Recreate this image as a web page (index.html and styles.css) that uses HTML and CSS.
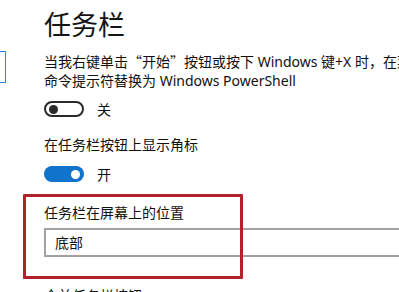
FILE: index.html
```html
<!DOCTYPE html>
<html lang="zh-CN">
<head>
<meta charset="utf-8">
<title>任务栏</title>
<link rel="stylesheet" href="styles.css">
</head>
<body>
<div class="page">
  <div class="side"><div class="side-box"></div></div>
  <div class="main">
    <h1 class="title">任务栏</h1>
    <p class="desc">当我右键单击<span class="q">“</span>开始<span class="q">”</span>按钮或按下 Windows 键+X 时，在菜单中将命令提示符<br>命令提示符替换为 Windows PowerShell</p>
    <div class="toggle-row">
      <span class="toggle off"><span class="knob"></span></span>
      <span class="state">关</span>
    </div>
    <p class="label label-badge">在任务栏按钮上显示角标</p>
    <div class="toggle-row row-on">
      <span class="toggle on"><span class="knob"></span></span>
      <span class="state">开</span>
    </div>
    <p class="label label-pos">任务栏在屏幕上的位置</p>
    <div class="select">底部</div>
    <p class="label label-merge">合并任务栏按钮</p>
  </div>
  <div class="highlight"></div>
</div>
</body>
</html>
```
FILE: styles.css
```css
html, body {
  margin: 0;
  padding: 0;
  background: #ffffff;
}
body {
  font-family: "Noto Sans", "Noto Sans CJK SC", sans-serif;
  font-size: 14px;
  color: #111;
  overflow: hidden;
}
.page {
  position: relative;
  display: flex;
  width: 399px;
  height: 292px;
  overflow: hidden;
}
.side {
  width: 6px;
  flex: none;
  overflow: hidden;
}
.side-box {
  margin-top: 51px;
  margin-left: -24px;
  width: 28px;
  height: 30px;
  border: 1.5px solid #3a86c8;
}
.main {
  flex: 1;
  min-width: 0;
  padding-left: 38px;
  white-space: nowrap;
}
.title {
  margin: 6px 0 0;
  font-size: 27px;
  line-height: 36px;
  font-weight: 400;
  color: #151515;
  font-family: "Noto Sans CJK SC", sans-serif;
}
.desc {
  margin: 10px 0 0;
  line-height: 19px;
  color: #111;
}
.q {
  font-family: "Noto Sans CJK SC", sans-serif;
}
.toggle-row {
  display: flex;
  align-items: center;
  gap: 13px;
  height: 16px;
  margin-top: 11px;
}
.row-on {
  margin-top: 12px;
}
.toggle {
  box-sizing: border-box;
  width: 40px;
  height: 16px;
  border-radius: 8px;
  display: flex;
  align-items: center;
}
.toggle.off {
  border: 2px solid #2a2a2a;
  padding-left: 3px;
}
.toggle.off .knob {
  width: 9px;
  height: 9px;
  border-radius: 50%;
  background: #2a2a2a;
}
.toggle.on {
  background: #1173cc;
  justify-content: flex-end;
  padding-right: 4px;
}
.toggle.on .knob {
  width: 9px;
  height: 9px;
  border-radius: 50%;
  background: #ffffff;
}
.state {
  font-family: "Noto Sans CJK SC", sans-serif;
  line-height: 16px;
}
.label {
  margin: 0;
  line-height: 19px;
  font-family: "Noto Sans CJK SC", sans-serif;
}
.label-badge {
  margin-top: 18px;
}
.label-pos {
  margin-top: 21px;
}
.select {
  box-sizing: border-box;
  margin-top: 6px;
  height: 29px;
  width: 380px;
  border: 2px solid #a2a2a2;
  padding-left: 9px;
  line-height: 25px;
  font-family: "Noto Sans CJK SC", sans-serif;
}
.label-merge {
  margin-top: 29px;
}
.highlight {
  position: absolute;
  left: 23px;
  top: 194px;
  width: 220px;
  height: 85px;
  box-sizing: border-box;
  border: 3px solid #b1232b;
  border-radius: 1px;
}
```
